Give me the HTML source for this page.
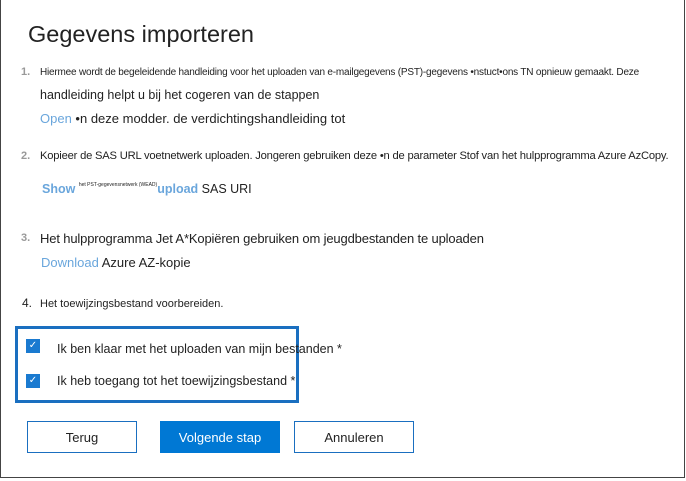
<html><head><style>
body{margin:0;width:686px;height:481px;background:#fff;font-family:"Liberation Sans",sans-serif;position:relative;overflow:hidden;color:#222}
.f{position:absolute;left:0;top:0;width:683px;height:477px;border:1px solid #444;border-top:none}
.a{position:absolute;white-space:nowrap}
.n{color:#999;font-weight:bold}
.l{color:#6aa6dc}
.cb{position:absolute;width:14px;height:14px;background:#1a7ad0;color:#fff;font-size:10px;text-align:center;line-height:14px}
.b{position:absolute;top:421px;height:32px;box-sizing:border-box;border:1px solid #1a6fc0;font-size:13px;text-align:center;line-height:31px}
</style></head><body>
<div class="f"></div>
<div class="a" style="left:28px;top:21px;font-size:23.5px;color:#222">Gegevens importeren</div>
<div class="a n" style="left:21px;top:66px;font-size:11px">1.</div>
<div class="a" style="left:40px;top:67px;font-size:10px;letter-spacing:-0.2px">Hiermee wordt de begeleidende handleiding voor het uploaden van e-mailgegevens (PST)-gegevens •nstuct•ons TN opnieuw gemaakt. Deze</div>
<div class="a" style="left:40px;top:88px;font-size:12.5px">handleiding helpt u bij het cogeren van de stappen</div>
<div class="a" style="left:40px;top:111px;font-size:13px"><span class="l">Open</span> •n deze modder. de verdichtingshandleiding tot</div>
<div class="a n" style="left:21px;top:150px;font-size:11px">2.</div>
<div class="a" style="left:40px;top:150px;font-size:11.2px;letter-spacing:-0.2px">Kopieer de SAS URL voetnetwerk uploaden. Jongeren gebruiken deze •n de parameter Stof van het hulpprogramma Azure AzCopy.</div>
<div class="a" style="left:42px;top:182px;font-size:12.5px"><span class="l" style="font-weight:bold">Show</span> <span style="font-size:5px;vertical-align:top">het PST-gegevensnetwerk (WEAD)</span><span class="l" style="font-weight:bold">upload</span> SAS URI</div>
<div class="a n" style="left:21px;top:232px;font-size:11px">3.</div>
<div class="a" style="left:40px;top:231px;font-size:13px;letter-spacing:-0.15px">Het hulpprogramma Jet A*Kopiëren gebruiken om jeugdbestanden te uploaden</div>
<div class="a" style="left:41px;top:255px;font-size:13px"><span class="l">Download</span> Azure AZ-kopie</div>
<div class="a" style="left:22px;top:296px;font-size:12px">4.</div>
<div class="a" style="left:40px;top:298px;font-size:11px">Het toewijzingsbestand voorbereiden.</div>
<div class="a" style="left:15px;top:326px;width:278px;height:71px;border:3px solid #1a6fc0"></div>
<div class="cb" style="left:26px;top:339px">✓</div>
<div class="a" style="left:57px;top:342px;font-size:12.5px">Ik ben klaar met het uploaden van mijn bestanden *</div>
<div class="cb" style="left:26px;top:374px">✓</div>
<div class="a" style="left:57px;top:374px;font-size:12.5px">Ik heb toegang tot het toewijzingsbestand *</div>
<div class="b" style="left:27px;width:110px">Terug</div>
<div class="b" style="left:160px;width:120px;background:#0078d4;color:#fff;border-color:#0078d4">Volgende stap</div>
<div class="b" style="left:294px;width:120px">Annuleren</div>
</body></html>
